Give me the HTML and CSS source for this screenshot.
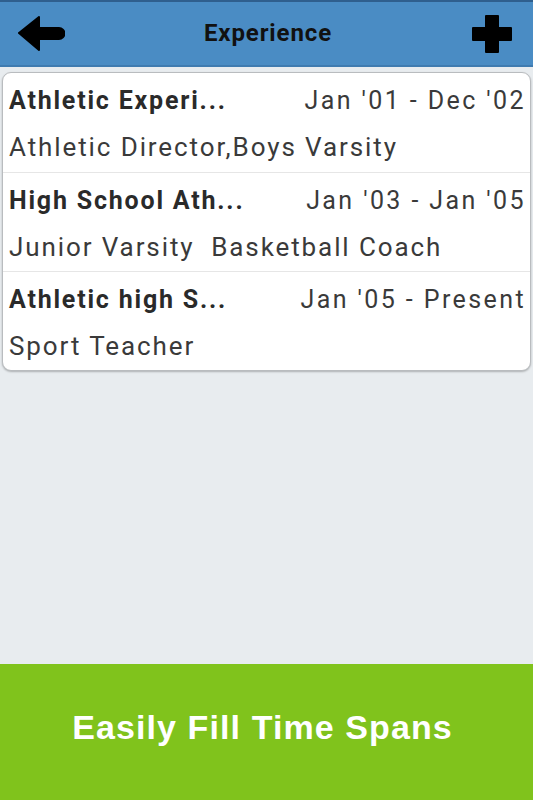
FILE: index.html
```html
<!DOCTYPE html>
<html>
<head>
  <title>Experience</title>
  <link rel="stylesheet" href="styles.css">
</head>
<body>

  <div class="header">
    <span class="icon-btn">
      <svg width="48" height="36" viewBox="0 0 48 36">
        <path d="M2 17 L22 1 L22 12 L42 12 A5.5 5.5 0 0 1 42 23 L22 23 L22 34 Z" fill="#000" stroke="#000" stroke-width="2" stroke-linejoin="round"/>
      </svg>
    </span>
    <h1>Experience</h1>
    <span class="icon-btn">
      <svg width="42" height="40" viewBox="0 0 42 40">
        <path d="M15 2 h12 v12 h13 v12 h-13 v12 h-12 v-12 h-13 v-12 h13 z" fill="#000" stroke="#000" stroke-width="2" stroke-linejoin="round"/>
      </svg>
    </span>
  </div>

  <div class="content">
    <div class="list">
      <div class="item">
        <div class="item-top">
          <span class="item-title">Athletic Experi...</span>
          <span class="item-date">Jan '01 - Dec '02</span>
        </div>
        <div class="item-sub">Athletic Director,Boys Varsity Basketball Coach</div>
      </div>
      <div class="item">
        <div class="item-top">
          <span class="item-title">High School Ath...</span>
          <span class="item-date">Jan '03 - Jan '05</span>
        </div>
        <div class="item-sub">Junior Varsity&nbsp; Basketball Coach</div>
      </div>
      <div class="item">
        <div class="item-top">
          <span class="item-title">Athletic high S...</span>
          <span class="item-date">Jan '05 - Present</span>
        </div>
        <div class="item-sub">Sport Teacher</div>
      </div>
    </div>
  </div>

  <div class="banner">Easily Fill Time Spans</div>

</body>
</html>
```

FILE: styles.css
```css
body {
  margin: 0;
  font-family: Roboto, "Noto Sans", sans-serif;
  background-color: #e8ecef;
  height: 800px;
  display: flex;
  flex-direction: column;
}

.header {
  background-color: #4a8cc4;
  border-top: 2px solid #2f5f8e;
  border-bottom: 2px solid #3f7bb0;
  height: 63px;
  display: flex;
  align-items: center;
  justify-content: space-between;
  padding: 0 20px 0 17px;
}

.header h1 {
  margin: 0 0 2px 0;
  font-size: 24px;
  font-weight: bold;
  letter-spacing: 0.9px;
  color: #111;
}

.icon-btn {
  display: flex;
  align-items: center;
}

.content {
  flex: 1;
  padding: 5px 2px 0 2px;
}

.list {
  background-color: #fff;
  border: 1px solid #b9bcbf;
  border-radius: 9px;
  box-shadow: 0 1px 2px rgba(0, 0, 0, 0.25);
  overflow: hidden;
}

.item {
  height: 90px;
  overflow: hidden;
  padding: 8px 4px 0 6px;
  border-top: 1px solid #e6e6e6;
  color: #333;
}

.item:first-child {
  border-top: none;
  height: 91px;
}

.item-top {
  display: flex;
  justify-content: space-between;
  align-items: baseline;
  height: 40px;
  line-height: 40px;
}

.item-title {
  font-size: 25px;
  font-weight: bold;
  letter-spacing: 1.8px;
  color: #2a2a2a;
}

.item-date {
  font-size: 25px;
  letter-spacing: 2.4px;
  color: #3a3a3a;
}

.item-sub {
  font-size: 26px;
  line-height: 37px;
  letter-spacing: 1.9px;
  color: #3a3a3a;
  margin-top: 8px;
}

.banner {
  height: 126px;
  padding: 0 8px 10px 0;
  background-color: #80c31c;
  color: #fff;
  font-family: "Liberation Sans", Arial, sans-serif;
  font-weight: bold;
  font-size: 34px;
  letter-spacing: 1.1px;
  display: flex;
  align-items: center;
  justify-content: center;
}
```
